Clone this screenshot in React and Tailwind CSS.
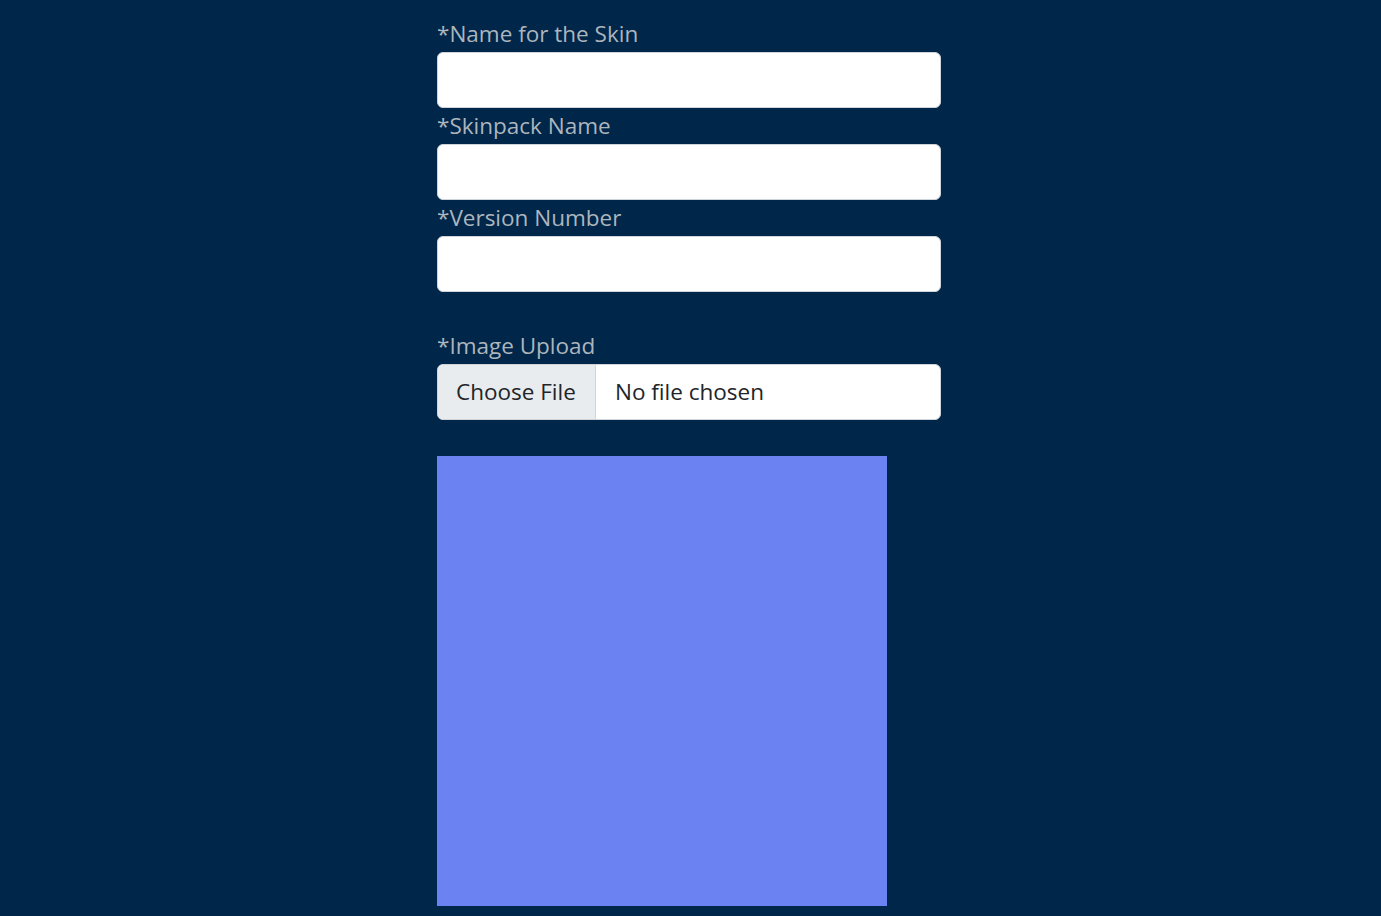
import React from 'react';

const Field = ({ label }) => (
  <div className="flex flex-col">
    <label className="text-[22.5px] leading-[36px] text-[#adb5bd]">{label}</label>
    <input
      type="text"
      className="h-[56px] w-full rounded-[6px] border border-[#ced4da] bg-white px-4 text-[22.5px] text-[#212529] outline-none"
    />
  </div>
);

const App = () => {
  return (
    <div className="min-h-screen bg-[#00264a] font-['Open_Sans',sans-serif]">
      <div className="ml-[437px] w-[504px] pt-4">
        <Field label="*Name for the Skin" />
        <Field label="*Skinpack Name" />
        <Field label="*Version Number" />

        <div className="mt-9 flex flex-col">
          <label className="text-[22.5px] leading-[36px] text-[#adb5bd]">*Image Upload</label>
          <div className="flex h-[56px] overflow-hidden rounded-[6px] border border-[#ced4da] bg-white text-[22.5px] text-[#212529]">
            <span className="flex w-[158px] items-center border-r border-[#ced4da] bg-[#e9ecef] px-[18px]">Choose File</span>
            <span className="flex items-center px-[19px]">No file chosen</span>
          </div>
        </div>

        <div className="mt-9 h-[450px] w-[450px] bg-[#6a82f2]" />
      </div>
    </div>
  );
};

export default App;
